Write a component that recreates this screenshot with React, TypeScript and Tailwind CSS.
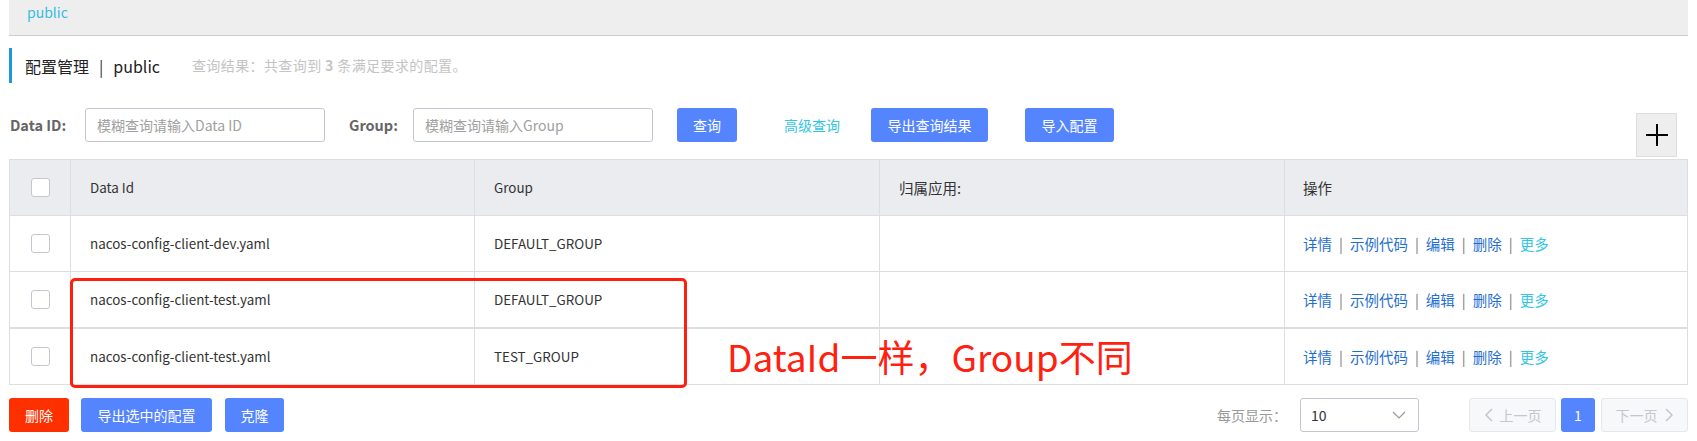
import React from "react";

const rows = [
  { id: "nacos-config-client-dev.yaml", group: "DEFAULT_GROUP" },
  { id: "nacos-config-client-test.yaml", group: "DEFAULT_GROUP" },
  { id: "nacos-config-client-test.yaml", group: "TEST_GROUP" },
];

function Checkbox() {
  return <div className="w-[19px] h-[19px] rounded-[3px] border border-[#c4c6cf] bg-white" />;
}

function Actions() {
  return (
    <div className="flex items-center text-[14.5px] text-[#1f6fd0]">
      <span>详情</span>
      <span className="mx-[7px] text-[#777]">|</span>
      <span>示例代码</span>
      <span className="mx-[7px] text-[#777]">|</span>
      <span>编辑</span>
      <span className="mx-[7px] text-[#777]">|</span>
      <span>删除</span>
      <span className="mx-[7px] text-[#777]">|</span>
      <span className="text-[#33c6e4]">更多</span>
    </div>
  );
}

export default function App() {
  return (
    <div className="w-[1697px] h-[441px] bg-white px-[9px] font-['Noto_Sans_CJK_SC',sans-serif] text-[#333] overflow-hidden">
      {/* breadcrumb bar */}
      <div className="h-[36px] bg-[#eeeeee] border-b border-[#cccccc] pl-[18px] pt-[2px] text-[14px] leading-[20px] text-[#35bde0]">
        public
      </div>

      {/* title */}
      <div className="mt-[12px] h-[35px] border-l-[3px] border-[#1a9bd7] pl-[13px] flex items-center">
        <span className="text-[16px] text-[#222]">配置管理</span>
        <span className="text-[16px] mx-[10px] text-[#333]">|</span>
        <span className="text-[16px] text-[#222]">public</span>
        <span className="ml-[32px] text-[14px] tracking-[0.4px] text-[#c4c4c4]">
          查询结果：共查询到 <b className="font-bold">3</b> 条满足要求的配置。
        </span>
      </div>

      {/* search row */}
      <div className="mt-[25px] flex items-start">
        <div className="flex items-center h-[34px]">
          <span className="w-[61px] pl-[1px] text-[14.5px] font-bold text-[#666] whitespace-nowrap">Data ID:</span>
          <div className="ml-[15px] w-[240px] h-[34px] border border-[#c4c6cf] rounded-[3px] flex items-center px-[11px] text-[14px] text-[#a0a0a0]">
            模糊查询请输入Data ID
          </div>
          <span className="ml-[24px] w-[48px] text-[14.5px] font-bold text-[#666] whitespace-nowrap">Group:</span>
          <div className="ml-[16px] w-[240px] h-[34px] border border-[#c4c6cf] rounded-[3px] flex items-center px-[11px] text-[14px] text-[#a0a0a0]">
            模糊查询请输入Group
          </div>
          <button className="ml-[24px] w-[60px] h-[34px] rounded-[3px] bg-[#5584ff] text-white text-[14px]">查询</button>
          <span className="ml-[47px] text-[14px] text-[#33c6e4]">高级查询</span>
          <button className="ml-[31px] w-[117px] h-[34px] rounded-[3px] bg-[#5584ff] text-white text-[14px]">导出查询结果</button>
          <button className="ml-[37px] w-[89px] h-[34px] rounded-[3px] bg-[#5584ff] text-white text-[14px]">导入配置</button>
        </div>
        <div className="ml-auto mr-[11px] mt-[5px] w-[41px] h-[44px] bg-[#eeeeee] border border-[#dddddd] flex items-center justify-center">
          <svg width="24" height="24" viewBox="0 0 24 24">
            <path d="M12 1v22M1 12h22" stroke="#000" strokeWidth="2" />
          </svg>
        </div>
      </div>

      {/* table */}
      <div className="relative mt-[2px]">
        <div className="border border-[#dcdee3] text-[13.4px]">
          <div className="grid grid-cols-[61px_404px_405px_405px_1fr] h-[56px] bg-[#ebecf0] border-b border-[#dcdee3]">
            <div className="border-r border-[#dcdee3] flex items-center justify-center"><Checkbox /></div>
            <div className="border-r border-[#dcdee3] flex items-center px-[19px]">Data Id</div>
            <div className="border-r border-[#dcdee3] flex items-center px-[19px]">Group</div>
            <div className="border-r border-[#dcdee3] flex items-center px-[19px] text-[14.5px]">归属应用:</div>
            <div className="flex items-center px-[18px] text-[14.5px]">操作</div>
          </div>
          {rows.map((r, i) => (
            <div
              key={i}
              className={
                i === 0
                  ? "grid grid-cols-[61px_404px_405px_405px_1fr] h-[56px] border-b border-[#dcdee3]"
                  : i === 1
                  ? "grid grid-cols-[61px_404px_405px_405px_1fr] h-[57px] border-b-2 border-[#dcdee3]"
                  : "grid grid-cols-[61px_404px_405px_405px_1fr] h-[55px]"
              }
            >
              <div className="border-r border-[#dcdee3] flex items-center justify-center"><Checkbox /></div>
              <div className="border-r border-[#dcdee3] flex items-center px-[19px]">{r.id}</div>
              <div className="border-r border-[#dcdee3] flex items-center px-[19px]">{r.group}</div>
              <div className="border-r border-[#dcdee3]" />
              <div className="flex items-center px-[18px]"><Actions /></div>
            </div>
          ))}
        </div>

        {/* annotation */}
        <div className="absolute left-[61px] top-[119px] w-[617px] h-[110px] border-[3px] border-[#ff1f0f] rounded-[5px]" />
        <div className="absolute left-[718px] top-[179px] text-[37px] leading-none text-[#ff2010] whitespace-nowrap">
          DataId一样，Group不同
        </div>
      </div>

      {/* bottom bar */}
      <div className="mt-[13px] flex items-center h-[34px]">
        <button className="w-[60px] h-[34px] rounded-[3px] bg-[#ff3000] text-white text-[14px]">删除</button>
        <button className="ml-[12px] w-[131px] h-[34px] rounded-[3px] bg-[#5584ff] text-white text-[14px]">导出选中的配置</button>
        <button className="ml-[13px] w-[59px] h-[34px] rounded-[3px] bg-[#5584ff] text-white text-[14px]">克隆</button>

        <span className="ml-auto text-[14px] text-[#999]">每页显示：</span>
        <div className="ml-[13px] w-[119px] h-[34px] border border-[#c4c6cf] rounded-[3px] flex items-center pl-[10px] pr-[12px]">
          <span className="text-[14px] text-[#333]">10</span>
          <svg className="ml-auto" width="14" height="14" viewBox="0 0 14 14">
            <path d="M1 4l6 6 6-6" fill="none" stroke="#999" strokeWidth="1.2" />
          </svg>
        </div>
        <div className="ml-[50px] w-[87px] h-[34px] border border-[#e6e7eb] bg-[#f7f8fa] rounded-[3px] flex items-center justify-center gap-[6px] text-[14px] text-[#c4c6cf]">
          <svg width="10" height="16" viewBox="0 0 10 16">
            <path d="M8 2L2 8l6 6" fill="none" stroke="#c4c6cf" strokeWidth="1.5" />
          </svg>
          <span>上一页</span>
        </div>
        <div className="ml-[5px] w-[34px] h-[34px] rounded-[3px] bg-[#5584ff] text-white text-[14px] flex items-center justify-center">1</div>
        <div className="ml-[6px] w-[87px] h-[34px] border border-[#e6e7eb] bg-[#f7f8fa] rounded-[3px] flex items-center justify-center gap-[6px] text-[14px] text-[#c4c6cf]">
          <span>下一页</span>
          <svg width="10" height="16" viewBox="0 0 10 16">
            <path d="M2 2l6 6-6 6" fill="none" stroke="#c4c6cf" strokeWidth="1.5" />
          </svg>
        </div>
      </div>
    </div>
  );
}
